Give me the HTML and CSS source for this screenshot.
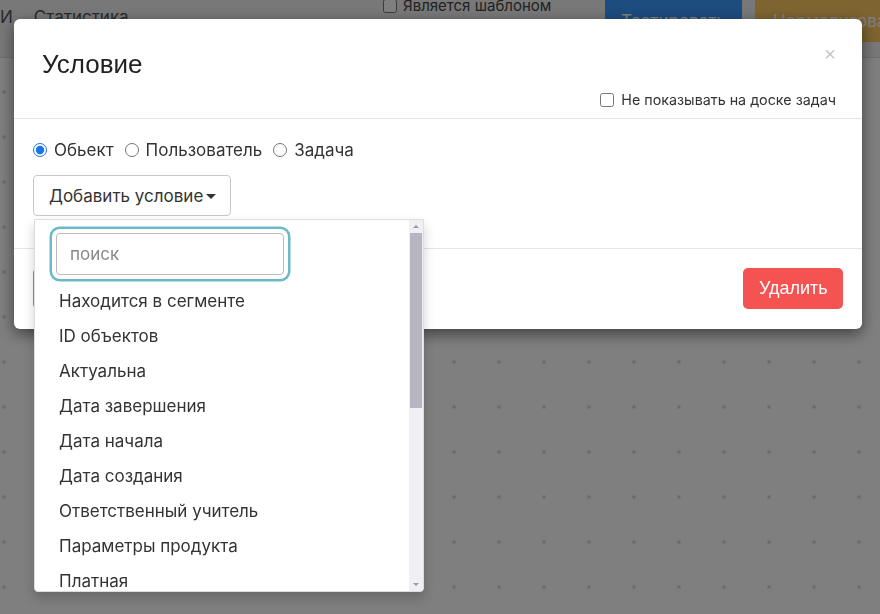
FILE: index.html
```html
<!DOCTYPE html>
<html lang="ru">

<head>
    <meta charset="UTF-8">
    <meta name="viewport" content="width=device-width, initial-scale=1.0">
    <title>Условие</title>
    <link rel="stylesheet" href="styles.css">
</head>

<body>

    <!-- Page behind the modal -->
    <div class="page">
        <header class="topbar">
            <div class="tabs">
                <span class="tab">И</span>
                <span class="tab">Статистика</span>
            </div>
            <label class="tpl"><input type="checkbox"> Является шаблоном</label>
            <button class="btn-test">Тестировать</button>
            <button class="btn-norm">Нормализовать</button>
        </header>
        <div class="canvas"></div>
    </div>

    <!-- Modal -->
    <div class="overlay">
        <div class="modal">
            <div class="modal-header">
                <div class="title-row">
                    <h4 class="modal-title">Условие</h4>
                    <span class="close">&times;</span>
                </div>
                <label class="hide-board"><input type="checkbox"> Не показывать на доске задач</label>
            </div>

            <div class="modal-body">
                <div class="radios">
                    <label><input type="radio" name="kind" checked> Обьект</label>
                    <label><input type="radio" name="kind"> Пользователь</label>
                    <label><input type="radio" name="kind"> Задача</label>
                </div>

                <div class="dropdown">
                    <button class="btn-add">Добавить условие <span class="caret"></span></button>

                    <div class="dropdown-menu">
                        <div class="dd-list">
                            <div class="dd-search">
                                <input type="text" placeholder="поиск">
                            </div>
                            <div class="dd-item">Находится в сегменте</div>
                            <div class="dd-item">ID объектов</div>
                            <div class="dd-item">Актуальна</div>
                            <div class="dd-item">Дата завершения</div>
                            <div class="dd-item">Дата начала</div>
                            <div class="dd-item">Дата создания</div>
                            <div class="dd-item">Ответственный учитель</div>
                            <div class="dd-item">Параметры продукта</div>
                            <div class="dd-item">Платная</div>
                        </div>
                        <!-- scrollbar -->
                        <div class="dd-scroll">
                            <span class="arrow up"></span>
                            <div class="track"><div class="thumb"></div></div>
                            <span class="arrow down"></span>
                        </div>
                    </div>
                </div>
            </div>

            <div class="modal-footer">
                <button class="btn-save"></button>
                <button class="btn-delete">Удалить</button>
            </div>
        </div>
    </div>

</body>

</html>
```

FILE: styles.css
```css
body {
    margin: 0;
    padding: 0;
    font-family: Inter, "Noto Sans", sans-serif;
    color: #333;
    width: 880px;
    height: 614px;
    overflow: hidden;
}

/* ---- page behind ---- */

.page {
    height: 614px;
    background-color: #fff;
    background-image: radial-gradient(circle, #d6d6d6 1.6px, transparent 2.1px);
    background-size: 45px 45px;
    background-position: -18.5px -20.5px;
}

.topbar {
    height: 57px;
    display: flex;
    align-items: flex-start;
    overflow: hidden;
    background: #f0f0f0;
    border-bottom: 1px solid #dcdcdc;
}

.topbar > * {
    flex-shrink: 0;
}

.tabs {
    display: flex;
    gap: 21px;
    padding-top: 7px;
    width: 383px;
    font-size: 17px;
    color: #555;
}

.tpl {
    display: flex;
    align-items: center;
    gap: 6px;
    margin-top: -4px;
    width: 222px;
    font-size: 15px;
    color: #444;
}

.tpl input {
    margin: 0;
    width: 14px;
    height: 14px;
}

.btn-test,
.btn-norm {
    margin-top: -10px;
    height: 52px;
    border: none;
    border-radius: 6px;
    font-family: inherit;
    font-size: 17px;
    color: #fff;
    padding: 10px 0 0;
}

.btn-test {
    width: 137px;
    background: #3a98fe;
}

.btn-norm {
    margin-left: 13px;
    width: 150px;
    background: #fac860;
    text-align: left;
    padding-left: 18px;
}

/* ---- modal ---- */

.overlay {
    position: fixed;
    top: 0;
    left: 0;
    right: 0;
    bottom: 0;
    background: rgba(0, 0, 0, 0.5);
}

.modal {
    margin: 19px 0 0 14px;
    width: 848px;
    background: #fff;
    border-radius: 6px;
    box-shadow: 0 5px 15px rgba(0, 0, 0, 0.5);
}

.modal-header {
    padding: 25px 26px 8px 28px;
    border-bottom: 1px solid #e5e5e5;
}

.title-row {
    display: flex;
    justify-content: space-between;
    align-items: flex-start;
}

.modal-title {
    margin: 0;
    font-family: "Liberation Sans", Arial, sans-serif;
    font-weight: normal;
    font-size: 26px;
    line-height: 40px;
    color: #222;
}

.close {
    font-family: "Liberation Sans", Arial, sans-serif;
    font-size: 20px;
    line-height: 20px;
    color: #c4c4c4;
}

.hide-board {
    display: flex;
    justify-content: flex-end;
    align-items: center;
    gap: 7px;
    margin-top: 6px;
    font-size: 14.3px;
    line-height: 20px;
    color: #333;
}

.hide-board input {
    margin: 0;
    width: 14px;
    height: 14px;
}

.modal-body {
    padding: 19px 19px 32px;
    border-bottom: 1px solid #e5e5e5;
}

.radios {
    display: flex;
    gap: 11px;
    font-size: 17px;
    line-height: 24px;
    color: #333;
}

.radios label {
    display: flex;
    align-items: center;
    gap: 7px;
}

.radios input {
    margin: 0;
    width: 14px;
    height: 14px;
    accent-color: #1a73e8;
}

.dropdown {
    position: relative;
    margin-top: 13px;
}

.btn-add {
    height: 41px;
    padding: 0 14px 0 15px;
    background: #fff;
    border: 1px solid #c8c8c8;
    border-radius: 4px;
    font-family: inherit;
    font-size: 17px;
    color: #333;
    display: flex;
    align-items: center;
    gap: 3px;
}

.caret {
    width: 0;
    height: 0;
    border-left: 5px solid transparent;
    border-right: 5px solid transparent;
    border-top: 5px solid #333;
    margin-top: 2px;
}

.dropdown-menu {
    position: absolute;
    top: 44px;
    left: 1px;
    width: 388px;
    height: 371px;
    display: flex;
    background: #fff;
    border: 1px solid #ddd;
    border-radius: 0 0 4px 4px;
    box-shadow: 0 6px 12px rgba(0, 0, 0, 0.18);
    overflow: hidden;
    z-index: 10;
}

.dd-list {
    flex: 1;
}

.dd-search {
    padding: 13px 0 9px 21px;
}

.dd-search input {
    box-sizing: border-box;
    width: 228px;
    height: 42px;
    padding: 0 13px;
    border: 1px solid #bbb;
    border-radius: 4px;
    font-family: inherit;
    font-size: 17px;
    color: #333;
    box-shadow: 0 0 0 4px #fff, 0 0 0 6.5px #6cb9c8;
    outline: none;
}

.dd-search input::placeholder {
    color: #888;
}

.dd-item {
    height: 35px;
    line-height: 35px;
    padding-left: 24px;
    font-size: 17px;
    color: #333;
    white-space: nowrap;
}

.dd-scroll {
    width: 14px;
    display: flex;
    flex-direction: column;
    background: #efeff4;
}

.arrow {
    height: 13px;
    display: flex;
    justify-content: center;
    align-items: center;
}

.arrow::before {
    content: "";
    border-left: 3px solid transparent;
    border-right: 3px solid transparent;
}

.arrow.up::before {
    border-bottom: 3px solid #9a9a9a;
}

.arrow.down::before {
    border-top: 3px solid #9a9a9a;
}

.track {
    flex: 1;
}

.thumb {
    margin: 0 1px;
    height: 175px;
    background: #b5b6c0;
}

/* ---- footer ---- */

.modal-footer {
    display: flex;
    justify-content: space-between;
    padding: 19px 19px 20px;
}

.modal-footer button {
    height: 41px;
    border: none;
    border-radius: 5px;
    font-family: "Liberation Sans", Arial, sans-serif;
    font-size: 18px;
    color: #fff;
    padding: 0 16px;
}

.btn-save {
    width: 110px;
    background: #5cb85c;
}

.btn-delete {
    width: 100px;
    background: #f55252;
}
```
